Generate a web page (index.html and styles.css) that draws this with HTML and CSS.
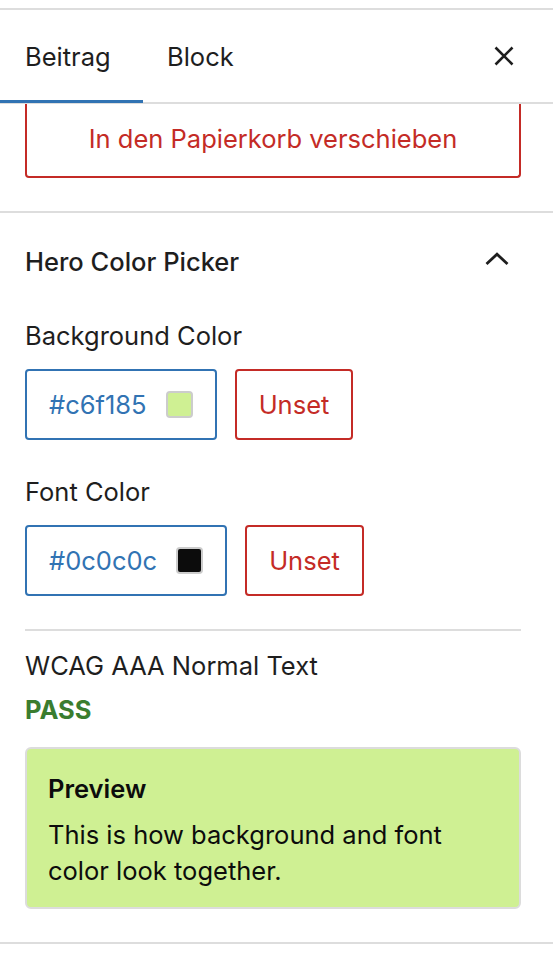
FILE: index.html
```html
<!DOCTYPE html>
<html lang="de">
<head>
<meta charset="utf-8">
<title>Beitrag</title>
<link rel="stylesheet" href="styles.css">
</head>
<body>
<div class="sidebar">
  <div class="topbar"></div>
  <div class="tabs">
    <div class="tab is-active">Beitrag</div>
    <div class="tab">Block</div>
    <button class="close" aria-label="Schließen">
      <svg width="24" height="24" viewBox="0 0 24 24"><path d="M3.5 3.5L20.5 20.5M20.5 3.5L3.5 20.5" stroke="#1e1e1e" stroke-width="2.6" fill="none"/></svg>
    </button>
  </div>
  <div class="actions">
    <button class="trash">In den Papierkorb verschieben</button>
  </div>
  <div class="panel">
    <div class="panel-head">
      <span class="panel-title">Hero Color Picker</span>
      <svg class="chevron" width="24" height="14" viewBox="0 0 24 14"><path d="M1.5 12L12 2.2L22.5 12" stroke="#1e1e1e" stroke-width="2.8" fill="none"/></svg>
    </div>
    <div class="field-label first">Background Color</div>
    <div class="color-row">
      <div class="color-input"><span class="hex">#c6f185</span><span class="swatch swatch-bg"></span></div>
      <button class="unset">Unset</button>
    </div>
    <div class="field-label">Font Color</div>
    <div class="color-row">
      <div class="color-input"><span class="hex">#0c0c0c</span><span class="swatch swatch-fg"></span></div>
      <button class="unset">Unset</button>
    </div>
    <div class="divider"></div>
    <div class="wcag">WCAG AAA Normal Text</div>
    <div class="pass">PASS</div>
    <div class="preview">
      <div class="preview-title">Preview</div>
      <div class="preview-text">This is how background and font color look together.</div>
    </div>
  </div>
</div>
</body>
</html>
```

FILE: styles.css
```css
* { box-sizing: border-box; }
html, body { margin: 0; padding: 0; background: #fff; }
body {
  font-family: Inter, "Noto Sans", sans-serif;
  font-size: 25.5px;
  color: #1e1e1e;
}
.sidebar { width: 553px; }
.topbar { height: 10px; border-bottom: 2px solid #dddddd; }
.tabs {
  display: flex;
  align-items: center;
  height: 94px;
  border-bottom: 2px solid #dddddd;
}
.tab {
  position: relative;
  height: 92px;
  display: flex;
  align-items: center;
  padding-left: 25px;
  font-size: 25.5px;
}
.tab.is-active { width: 143px; }
.tab.is-active::after {
  content: "";
  position: absolute;
  left: 0; right: 0; bottom: -1px;
  height: 3px;
  background: #3173b3;
}
.tab + .tab { padding-left: 24px; }
.close {
  margin-left: auto;
  margin-right: 37px;
  background: none;
  border: 0;
  padding: 0;
  width: 24px; height: 24px;
  display: flex;
}
.actions {
  padding: 0 32px 33px 25px;
  border-bottom: 2px solid #dddddd;
}
.trash {
  display: block;
  width: 496px;
  height: 74px;
  padding: 0 0 4px;
  background: #fff;
  border: 2px solid #c42b26;
  border-top: 0;
  border-radius: 0 0 4px 4px;
  color: #c42b26;
  font-family: inherit;
  font-size: 25.5px;
}
.panel {
  padding: 0 32px 33px 25px;
  border-bottom: 2px solid #dddddd;
}
.panel-head {
  height: 96px;
  display: flex;
  align-items: center;
  justify-content: space-between;
}
.panel-title { font-weight: 500; font-size: 25.5px; }
.chevron { margin-right: 12px; margin-top: -4px; }
.field-label { line-height: 36px; margin-top: 34px; }
.field-label.first { margin-top: 9px; }
.color-row {
  display: flex;
  gap: 18px;
  margin-top: 15px;
}
.color-input {
  height: 71px;
  display: flex;
  align-items: center;
  gap: 19px;
  padding: 0 22px;
  border: 2px solid #3173b3;
  border-radius: 4px;
}
.hex { color: #3173b3; font-size: 25.5px; }
.swatch {
  width: 27px; height: 27px;
  border: 2px solid #cccccc;
  border-radius: 4px;
}
.swatch-bg { background: #cff093; }
.swatch-fg { background: #0c0c0c; }
.unset {
  height: 71px;
  padding: 0 22px;
  background: #fff;
  border: 2px solid #c42b26;
  border-radius: 4px;
  color: #c42b26;
  font-family: inherit;
  font-size: 25.5px;
}
.divider { height: 2px; background: #dddddd; margin-top: 33px; }
.wcag { line-height: 36px; margin-top: 17px; }
.pass { line-height: 36px; margin-top: 8px; font-weight: 700; color: #3a7d2f; }
.preview {
  margin-top: 19px;
  padding: 22px 21px 18px;
  background: #cff093;
  border: 2px solid #dcdcdc;
  border-radius: 6px;
  color: #0c0c0c;
}
.preview-title { line-height: 36px; font-weight: 600; }
.preview-text { line-height: 36px; margin-top: 10px; max-width: 425px; }
```
